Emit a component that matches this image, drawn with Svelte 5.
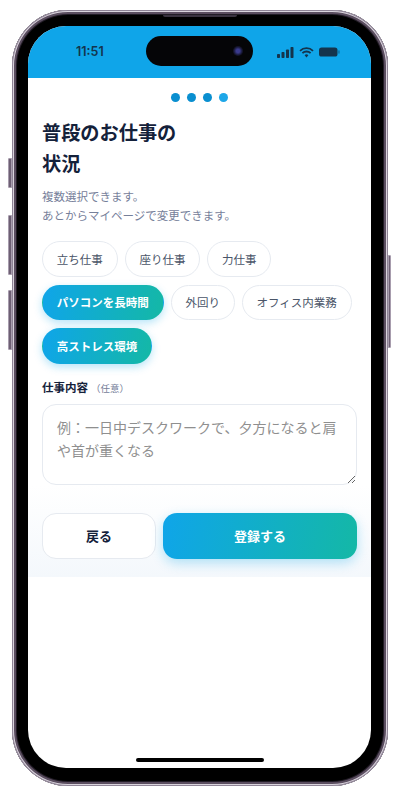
<script>
	const options = [
		{ label: '立ち仕事', selected: false },
		{ label: '座り仕事', selected: false },
		{ label: '力仕事', selected: false },
		{ label: 'パソコンを長時間', selected: true },
		{ label: '外回り', selected: false },
		{ label: 'オフィス内業務', selected: false },
		{ label: '高ストレス環境', selected: true }
	];
	const steps = [1, 2, 3, 4];
	// full-width colon and parens, as in the design
	const hint = '例\uFF1A一日中デスクワークで、夕方になると肩や首が重くなる';
	const optional = '\uFF08任意\uFF09';
</script>

<div class="page">
	<div class="phone">
		<span class="side vol-mute"></span>
		<span class="side vol-up"></span>
		<span class="side vol-down"></span>
		<span class="side power"></span>
		<span class="speaker"></span>

		<div class="screen">
			<header class="status">
				<span class="time">11:51</span>
				<div class="island"><span class="camera"></span></div>
				<div class="status-icons">
					<svg width="17" height="11" viewBox="0 0 17 11">
						<rect x="0" y="7" width="3" height="4" rx="0.8" />
						<rect x="4.5" y="5" width="3" height="6" rx="0.8" />
						<rect x="9" y="2.5" width="3" height="8.5" rx="0.8" />
						<rect x="13.5" y="0" width="3" height="11" rx="0.8" />
					</svg>
					<svg width="15" height="11" viewBox="0 0 15 11">
						<path class="arc" d="M1 3.8a9.2 9.2 0 0 1 13 0" />
						<path class="arc" d="M3.4 6.2a5.8 5.8 0 0 1 8.2 0" />
						<path d="M5.6 8.3a2.7 2.7 0 0 1 3.8 0L7.5 10.6z" />
					</svg>
					<svg width="21" height="10" viewBox="0 0 21 10">
						<rect x="0" y="0.5" width="18.5" height="9" rx="2.6" />
						<rect x="19.2" y="3.2" width="1.5" height="3.6" rx="0.7" opacity="0.45" />
					</svg>
				</div>
			</header>

			<main class="content">
				<div class="dots">
					{#each steps as step}
						<span class="dot" class:current={step === 4}></span>
					{/each}
				</div>

				<h1>普段のお仕事の<br />状況</h1>
				<p class="lead">複数選択できます。<br />あとからマイページで変更できます。</p>

				<div class="chips">
					{#each options as option}
						<button class="chip" class:selected={option.selected}>{option.label}</button>
					{/each}
				</div>

				<label class="field-label" for="job">仕事内容<small>{optional}</small></label>
				<textarea id="job" placeholder={hint}></textarea>
			</main>

			<footer class="actions">
				<button class="back">戻る</button>
				<button class="submit">登録する</button>
			</footer>

			<span class="home-bar"></span>
		</div>
	</div>
</div>

<style>
	:global(body) {
		background: #fff;
	}

	.page {
		width: 402px;
		height: 802px;
		padding: 10px 14px 16px 12px;
		box-sizing: border-box;
		overflow: hidden;
		font-family: "Noto Sans CJK JP", "Noto Sans", sans-serif;
	}

	.phone {
		position: relative;
		height: 100%;
		box-sizing: border-box;
		padding: 16px 17px 18px 16px;
		background: #000;
		border-radius: 56px;
		box-shadow:
			inset 0 0 0 1px #8f8496,
			inset 0 0 0 2px #d9d3dc,
			inset 0 0 0 4px #5b4e60,
			inset 0 0 0 5px #221c26;
	}

	.side {
		position: absolute;
		background: #6d5f73;
		border: 1px solid #a79cad;
		box-sizing: border-box;
	}

	.vol-mute {
		left: -4px;
		top: 148px;
		width: 4px;
		height: 30px;
		border-radius: 1px 0 0 1px;
	}

	.vol-up {
		left: -4px;
		top: 205px;
		width: 4px;
		height: 60px;
		border-radius: 1px 0 0 1px;
	}

	.vol-down {
		left: -4px;
		top: 280px;
		width: 4px;
		height: 60px;
		border-radius: 1px 0 0 1px;
	}

	.power {
		right: -3px;
		top: 245px;
		width: 3px;
		height: 93px;
		border-radius: 0 1px 1px 0;
	}

	.speaker {
		position: absolute;
		top: 5px;
		left: 151px;
		width: 74px;
		height: 2px;
		border-radius: 0 0 2px 2px;
		background: #3a3340;
	}

	.screen {
		position: relative;
		height: 100%;
		display: flex;
		flex-direction: column;
		background: #fff;
		border-radius: 38px;
		overflow: hidden;
	}

	.status {
		position: relative;
		flex: none;
		height: 52px;
		display: flex;
		align-items: center;
		justify-content: space-between;
		padding: 0 31px 0 48px;
		background: #0fa5e9;
		color: #14344d;
	}

	.time {
		margin-top: -1px;
		font-family: Inter, "Noto Sans", sans-serif;
		font-size: 12.5px;
		font-weight: 600;
	}

	.island {
		position: absolute;
		left: 118px;
		top: 10px;
		width: 107px;
		height: 30px;
		border-radius: 15px;
		background: #050507;
	}

	.camera {
		position: absolute;
		right: 10px;
		top: 10px;
		width: 10px;
		height: 10px;
		border-radius: 50%;
		background: radial-gradient(circle, #3a3a8c 0 25%, #15152e 60%, #0a0a14 100%);
	}

	.status-icons {
		display: flex;
		align-items: center;
		gap: 5px;
	}

	.status-icons svg {
		display: block;
		fill: #14344d;
	}

	.status-icons .arc {
		fill: none;
		stroke: #14344d;
		stroke-width: 1.8;
	}

	.content {
		padding: 15px 14px 0;
	}

	.dots {
		display: flex;
		justify-content: center;
		gap: 7px;
		margin-right: 1px;
	}

	.dot {
		width: 9px;
		height: 9px;
		border-radius: 50%;
		background: #0a8fd0;
	}

	.dot.current {
		background: #1ea7e8;
	}

	h1 {
		margin: 15px 0 0;
		font-size: 19.2px;
		line-height: 31px;
		font-weight: 700;
		color: #14213a;
	}

	.lead {
		margin: 8px 0 0;
		font-size: 11.5px;
		line-height: 19px;
		color: #76809a;
	}

	.chips {
		display: flex;
		flex-wrap: wrap;
		gap: 8px 7px;
		margin-top: 16px;
	}

	.chip {
		height: 35.5px;
		padding: 0 13.8px;
		border: 1px solid #e6eaf0;
		border-radius: 18px;
		background: #fff;
		font-family: inherit;
		font-size: 11.5px;
		font-weight: 400;
		color: #4a5568;
	}

	.chip.selected {
		border-color: transparent;
		background: linear-gradient(100deg, #0fa5e9, #14b8a6);
		color: #fff;
		font-weight: 700;
		box-shadow: 0 3px 9px rgba(14, 165, 233, 0.3);
	}

	.field-label {
		display: block;
		margin-top: 14px;
		font-size: 11.5px;
		line-height: 18px;
		font-weight: 700;
		color: #14213a;
	}

	.field-label small {
		margin-left: 3px;
		font-size: 9.5px;
		font-weight: 400;
		color: #76809a;
	}

	textarea {
		display: block;
		width: 100%;
		height: 81px;
		margin-top: 7px;
		padding: 11px 14px;
		box-sizing: border-box;
		border: 1px solid #e6eaf0;
		border-radius: 14px;
		background: #fff;
		font-family: inherit;
		font-size: 14px;
		line-height: 23px;
		outline: none;
	}

	textarea::placeholder {
		color: #8f8f8f;
	}

	.actions {
		display: flex;
		gap: 7px;
		padding: 28px 14px 18px;
		background: linear-gradient(#fff, #f4f8fc);
	}

	.actions button {
		height: 46px;
		border-radius: 14px;
		font-family: inherit;
		font-size: 13px;
		font-weight: 700;
	}

	.back {
		flex: none;
		width: 114px;
		border: 1px solid #e6eaf0;
		background: #fff;
		color: #14213a;
	}

	.submit {
		flex: 1;
		border: none;
		background: linear-gradient(100deg, #0fa5e9, #14b8a6);
		color: #fff;
		box-shadow: 0 4px 12px rgba(14, 165, 233, 0.3);
	}

	.home-bar {
		position: absolute;
		left: 108px;
		bottom: 6px;
		width: 128px;
		height: 4px;
		border-radius: 2px;
		background: #000;
	}
</style>
